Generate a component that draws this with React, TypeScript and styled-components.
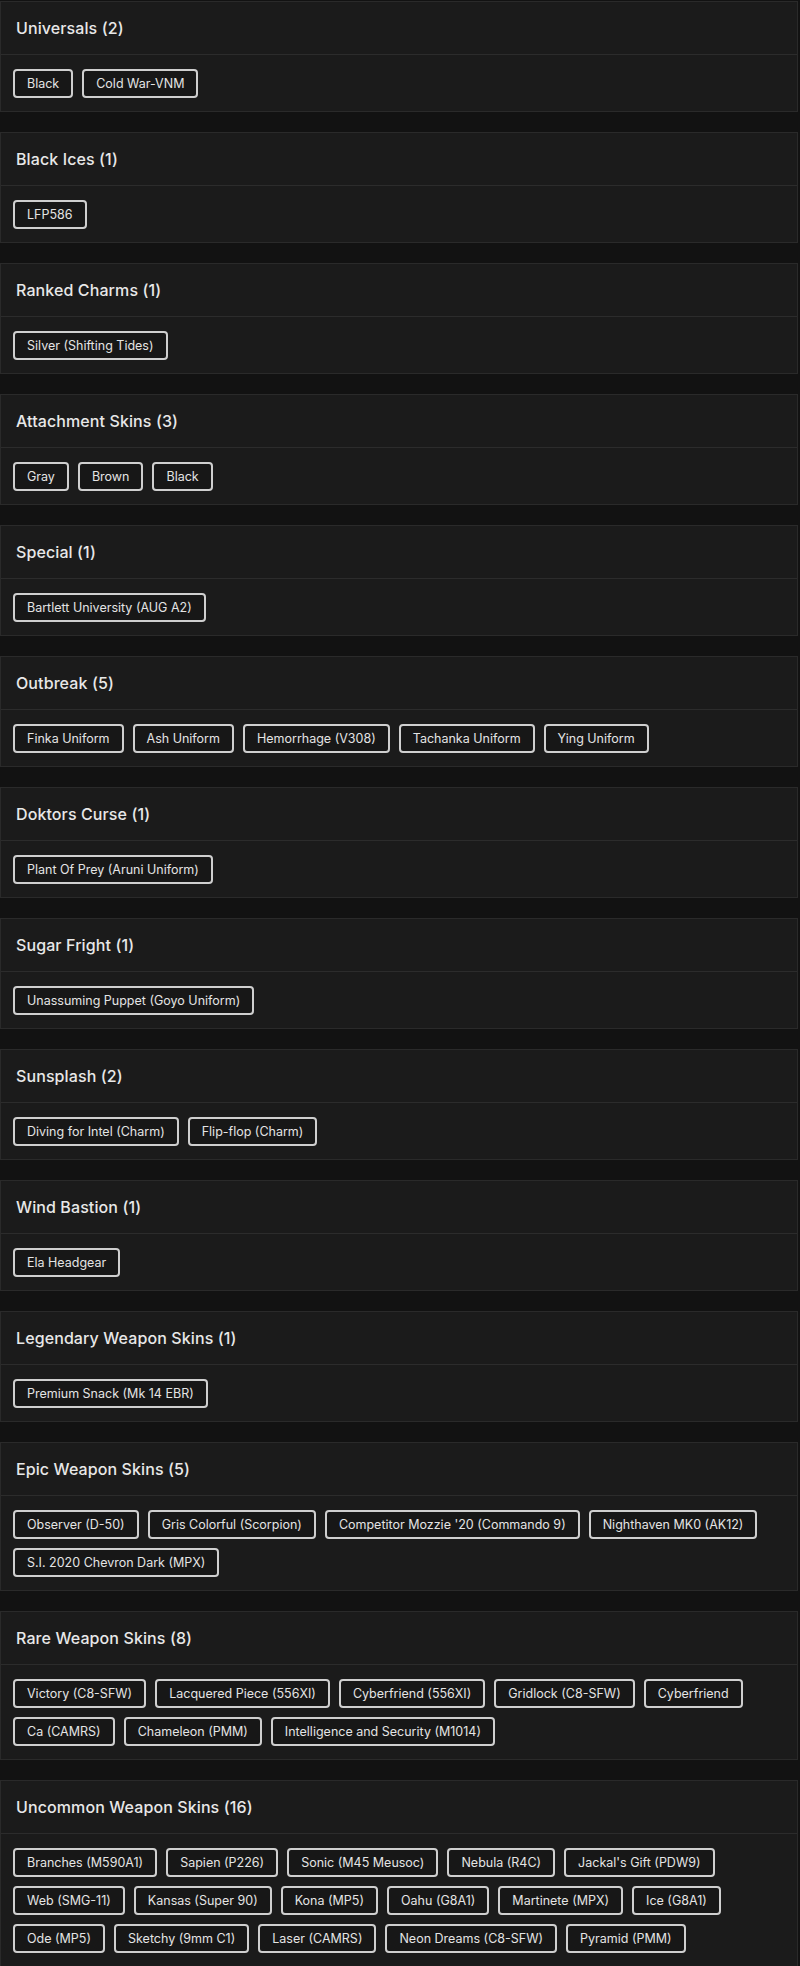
import styled, { createGlobalStyle } from 'styled-components';

type Category = {
  title: string;
  items: string[];
};

const categories: Category[] = [
  { title: 'Universals', items: ['Black', 'Cold War-VNM'] },
  { title: 'Black Ices', items: ['LFP586'] },
  { title: 'Ranked Charms', items: ['Silver (Shifting Tides)'] },
  { title: 'Attachment Skins', items: ['Gray', 'Brown', 'Black'] },
  { title: 'Special', items: ['Bartlett University (AUG A2)'] },
  {
    title: 'Outbreak',
    items: ['Finka Uniform', 'Ash Uniform', 'Hemorrhage (V308)', 'Tachanka Uniform', 'Ying Uniform'],
  },
  { title: 'Doktors Curse', items: ['Plant Of Prey (Aruni Uniform)'] },
  { title: 'Sugar Fright', items: ['Unassuming Puppet (Goyo Uniform)'] },
  { title: 'Sunsplash', items: ['Diving for Intel (Charm)', 'Flip-flop (Charm)'] },
  { title: 'Wind Bastion', items: ['Ela Headgear'] },
  { title: 'Legendary Weapon Skins', items: ['Premium Snack (Mk 14 EBR)'] },
  {
    title: 'Epic Weapon Skins',
    items: [
      'Observer (D-50)',
      'Gris Colorful (Scorpion)',
      "Competitor Mozzie '20 (Commando 9)",
      'Nighthaven MK0 (AK12)',
      'S.I. 2020 Chevron Dark (MPX)',
    ],
  },
  {
    title: 'Rare Weapon Skins',
    items: [
      'Victory (C8-SFW)',
      'Lacquered Piece (556XI)',
      'Cyberfriend (556XI)',
      'Gridlock (C8-SFW)',
      'Cyberfriend',
      'Ca (CAMRS)',
      'Chameleon (PMM)',
      'Intelligence and Security (M1014)',
    ],
  },
  {
    title: 'Uncommon Weapon Skins',
    items: [
      'Branches (M590A1)',
      'Sapien (P226)',
      'Sonic (M45 Meusoc)',
      'Nebula (R4C)',
      "Jackal's Gift (PDW9)",
      'Web (SMG-11)',
      'Kansas (Super 90)',
      'Kona (MP5)',
      'Oahu (G8A1)',
      'Martinete (MPX)',
      'Ice (G8A1)',
      'Ode (MP5)',
      'Sketchy (9mm C1)',
      'Laser (CAMRS)',
      'Neon Dreams (C8-SFW)',
      'Pyramid (PMM)',
    ],
  },
];

const GlobalStyle = createGlobalStyle`
  html, body {
    margin: 0;
    padding: 0;
    background: #121212;
  }
  body {
    font-family: Inter, "Noto Sans", "Liberation Sans", sans-serif;
    color: #e6e6e6;
  }
`;

const Page = styled.div`
  display: flex;
  flex-direction: column;
  gap: 20px;
  padding: 1px 2px 0 0;
`;

const Card = styled.section`
  background: #1b1b1b;
  border: 1px solid #2a2a2a;
`;

const Header = styled.div`
  height: 52px;
  display: flex;
  align-items: center;
  padding: 0 15px;
  border-bottom: 1px solid #2c2c2c;
`;

const Title = styled.h3`
  margin: 0;
  font-size: 16px;
  font-weight: 500;
  color: #e8e8e8;
  letter-spacing: 0.1px;
`;

const Body = styled.div`
  display: flex;
  flex-wrap: wrap;
  gap: 9px;
  padding: 14px 12px 13px;
`;

const Chip = styled.span`
  display: inline-flex;
  align-items: center;
  height: 29px;
  box-sizing: border-box;
  padding: 0 12px;
  border: 2px solid #cfcfcf;
  border-radius: 4px;
  background: #171717;
  font-size: 12.5px;
  color: #e4e4e4;
  white-space: nowrap;
`;

export default function App() {
  return (
    <>
      <GlobalStyle />
      <Page>
        {categories.map((cat) => (
          <Card key={cat.title}>
            <Header>
              <Title>
                {cat.title} ({cat.items.length})
              </Title>
            </Header>
            <Body>
              {cat.items.map((item, i) => (
                <Chip key={i}>{item}</Chip>
              ))}
            </Body>
          </Card>
        ))}
      </Page>
    </>
  );
}
